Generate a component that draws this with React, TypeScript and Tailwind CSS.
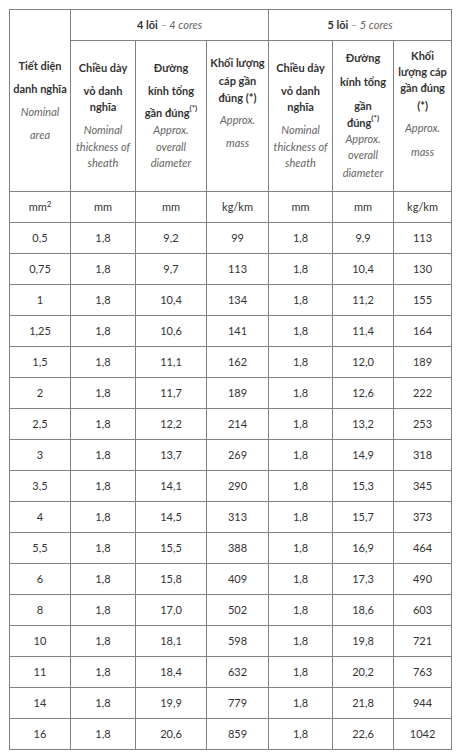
import React from 'react';

const rows: string[][] = [
  ['0,5', '1,8', '9,2', '99', '1,8', '9,9', '113'],
  ['0,75', '1,8', '9,7', '113', '1,8', '10,4', '130'],
  ['1', '1,8', '10,4', '134', '1,8', '11,2', '155'],
  ['1,25', '1,8', '10,6', '141', '1,8', '11,4', '164'],
  ['1,5', '1,8', '11,1', '162', '1,8', '12,0', '189'],
  ['2', '1,8', '11,7', '189', '1,8', '12,6', '222'],
  ['2,5', '1,8', '12,2', '214', '1,8', '13,2', '253'],
  ['3', '1,8', '13,7', '269', '1,8', '14,9', '318'],
  ['3,5', '1,8', '14,1', '290', '1,8', '15,3', '345'],
  ['4', '1,8', '14,5', '313', '1,8', '15,7', '373'],
  ['5,5', '1,8', '15,5', '388', '1,8', '16,9', '464'],
  ['6', '1,8', '15,8', '409', '1,8', '17,3', '490'],
  ['8', '1,8', '17,0', '502', '1,8', '18,6', '603'],
  ['10', '1,8', '18,1', '598', '1,8', '19,8', '721'],
  ['11', '1,8', '18,4', '632', '1,8', '20,2', '763'],
  ['14', '1,8', '19,9', '779', '1,8', '21,8', '944'],
  ['16', '1,8', '20,6', '859', '1,8', '22,6', '1042'],
];

const units = ['mm', 'mm', 'mm', 'kg/km', 'mm', 'mm', 'kg/km'];

const cell = 'border border-[#808080] text-center';
const hcell = 'border border-[#808080] text-center align-top p-0';
const b = 'font-bold leading-[16px] text-[#333]';
const it = 'italic leading-[16px] text-[#666]';

function Star() {
  return <sup className="relative -top-[1px] text-[8px] leading-none align-super">(*)</sup>;
}

function ThicknessCell() {
  return (
    <th className={hcell}>
      <div className="pt-[19px]">
        <div className={b}>Chiều dày</div>
        <div className={`${b} mt-[7px]`}>vỏ danh</div>
        <div className={b}>nghĩa</div>
        <div className={`${it} font-normal mt-[7px]`}>Nominal</div>
        <div className={`${it} font-normal mt-[1px]`}>thickness of</div>
        <div className={`${it} font-normal`}>sheath</div>
      </div>
    </th>
  );
}

export default function App() {
  return (
    <div className="min-h-screen bg-white font-['Lato','Liberation_Sans',sans-serif] text-[11px] text-[#333]">
      <div className="pl-[9px] pt-[9px]">
        <table className="border-collapse table-fixed w-[443px]">
          <colgroup>
            <col className="w-[61px]" />
            <col className="w-[65px]" />
            <col className="w-[71px]" />
            <col className="w-[62px]" />
            <col className="w-[64px]" />
            <col className="w-[61px]" />
            <col className="w-[58px]" />
          </colgroup>
          <thead>
            <tr>
              <th rowSpan={2} className={hcell}>
                <div className="pt-[44px]">
                  <div className="font-bold leading-[23px]">Tiết diện</div>
                  <div className="font-bold leading-[23px]">danh nghĩa</div>
                  <div className="italic font-normal leading-[23px] text-[#666]">Nominal</div>
                  <div className="italic font-normal leading-[23px] text-[#666]">area</div>
                </div>
              </th>
              <th colSpan={3} className={`${cell} h-[31px] align-middle p-0`}>
                <span className="font-bold">4 lõi</span>
                <span className="italic font-normal text-[#666]"> – 4 cores</span>
              </th>
              <th colSpan={3} className={`${cell} h-[31px] align-middle p-0`}>
                <span className="font-bold">5 lõi</span>
                <span className="italic font-normal text-[#666]"> – 5 cores</span>
              </th>
            </tr>
            <tr className="h-[151px]">
              <ThicknessCell />
              <th className={hcell}>
                <div className="pt-[19px]">
                  <div className={b}>Đường</div>
                  <div className={`${b} mt-[7px]`}>kính tổng</div>
                  <div className={`${b} mt-[6px]`}>
                    gần đúng<Star />
                  </div>
                  <div className={`${it} font-normal mt-[1px]`}>Approx.</div>
                  <div className={`${it} font-normal mt-[1px]`}>overall</div>
                  <div className={`${it} font-normal`}>diameter</div>
                </div>
              </th>
              <th className={hcell}>
                <div className="pt-[14px]">
                  <div className={b}>Khối lượng</div>
                  <div className={`${b} mt-[2px]`}>cáp gần</div>
                  <div className={`${b} mt-[1px]`}>đúng (*)</div>
                  <div className={`${it} font-normal mt-[6px]`}>Approx.</div>
                  <div className={`${it} font-normal mt-[7px]`}>mass</div>
                </div>
              </th>
              <ThicknessCell />
              <th className={hcell}>
                <div className="pt-[9px]">
                  <div className={b}>Đường</div>
                  <div className={`${b} mt-[8px]`}>kính tổng</div>
                  <div className={`${b} mt-[8px]`}>gần</div>
                  <div className={`${b} mt-[1px]`}>
                    đúng<Star />
                  </div>
                  <div className={`${it} font-normal`}>Approx.</div>
                  <div className={`${it} font-normal`}>overall</div>
                  <div className={`${it} font-normal mt-[2px]`}>diameter</div>
                </div>
              </th>
              <th className={hcell}>
                <div className="pt-[7px]">
                  <div className={b}>Khối</div>
                  <div className={b}>lượng cáp</div>
                  <div className={b}>gần đúng</div>
                  <div className={`${b} mt-[2px]`}>(*)</div>
                  <div className={`${it} font-normal mt-[6px]`}>Approx.</div>
                  <div className={`${it} font-normal mt-[8px]`}>mass</div>
                </div>
              </th>
            </tr>
          </thead>
          <tbody>
            <tr>
              <td className={`${cell} h-[31px] p-0`}>
                mm<sup className="text-[8px]">2</sup>
              </td>
              {units.slice(1).map((u, i) => (
                <td key={i} className={`${cell} h-[31px] p-0`}>
                  {u}
                </td>
              ))}
            </tr>
            {rows.map((r, i) => (
              <tr key={i}>
                {r.map((v, j) => (
                  <td key={j} className={`${cell} h-[31px] p-0`}>
                    {v}
                  </td>
                ))}
              </tr>
            ))}
          </tbody>
        </table>
      </div>
    </div>
  );
}
